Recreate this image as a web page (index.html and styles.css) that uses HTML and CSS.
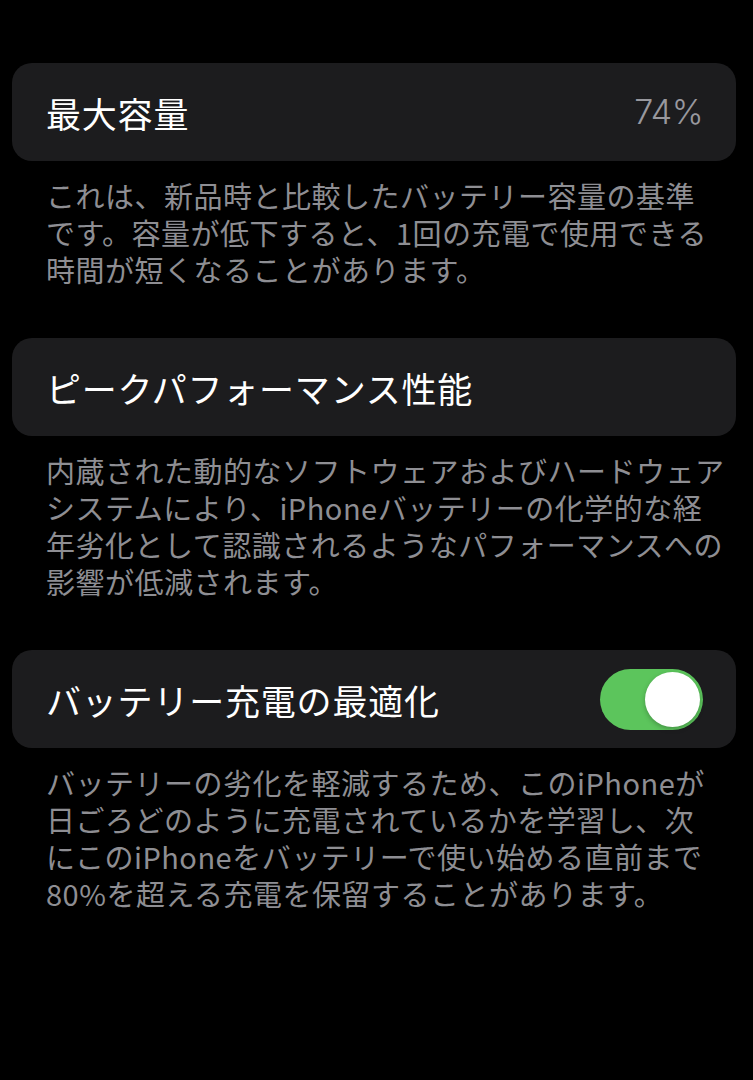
FILE: index.html
```html
<!DOCTYPE html>
<html lang="ja">
<head>
<meta charset="utf-8">
<link rel="stylesheet" href="styles.css">
</head>
<body>
<main class="page">
  <section class="group">
    <div class="card">
      <span class="title">最大容量</span>
      <span class="value">74%</span>
    </div>
    <p class="desc">これは、新品時と比較したバッテリー容量の基準<br>です。容量が低下すると、1回の充電で使用できる<br>時間が短くなることがあります。</p>
  </section>
  <section class="group">
    <div class="card">
      <span class="title">ピークパフォーマンス性能</span>
    </div>
    <p class="desc">内蔵された動的なソフトウェアおよびハードウェア<br>システムにより、iPhoneバッテリーの化学的な経<br>年劣化として認識されるようなパフォーマンスへの<br>影響が低減されます。</p>
  </section>
  <section class="group">
    <div class="card">
      <span class="title">バッテリー充電の最適化</span>
      <span class="toggle"><span class="knob"></span></span>
    </div>
    <p class="desc">バッテリーの劣化を軽減するため、このiPhoneが<br>日ごろどのように充電されているかを学習し、次<br>にこのiPhoneをバッテリーで使い始める直前まで<br>80%を超える充電を保留することがあります。</p>
  </section>
</main>
</body>
</html>
```

FILE: styles.css
```css
html, body {
  margin: 0;
  padding: 0;
  background: #000;
}
body {
  width: 753px;
  height: 1080px;
  overflow: hidden;
  font-family: "Noto Sans CJK JP", "Noto Sans", sans-serif;
}
.page {
  display: flex;
  flex-direction: column;
  gap: 50px;
  padding: 63px 17px 0 12px;
}
.group {
  display: flex;
  flex-direction: column;
}
.card {
  height: 98px;
  box-sizing: border-box;
  background: #1c1c1e;
  border-radius: 20px;
  display: flex;
  align-items: center;
  justify-content: space-between;
  padding: 0 33px 0 34px;
}
.title {
  color: #fff;
  font-size: 35px;
  letter-spacing: 0.8px;
  line-height: 1;
}
.value {
  color: #98989e;
  font-family: "Inter", "Noto Sans", sans-serif;
  font-size: 34px;
  font-weight: 300;
  line-height: 1;
  letter-spacing: -0.5px;
}
.desc {
  margin: 16px 0 0 0;
  padding-left: 34px;
  color: #8e8e93;
  font-size: 29px;
  line-height: 37px;
  letter-spacing: 0.5px;
  white-space: nowrap;
}
.toggle {
  width: 103px;
  height: 61px;
  border-radius: 31px;
  background: #5cc55c;
  display: flex;
  align-items: center;
  justify-content: flex-end;
  padding: 0 3px;
  box-sizing: border-box;
}
.knob {
  width: 55px;
  height: 55px;
  border-radius: 50%;
  background: #fff;
  box-shadow: 0 2px 5px rgba(0,0,0,0.25);
}
```
